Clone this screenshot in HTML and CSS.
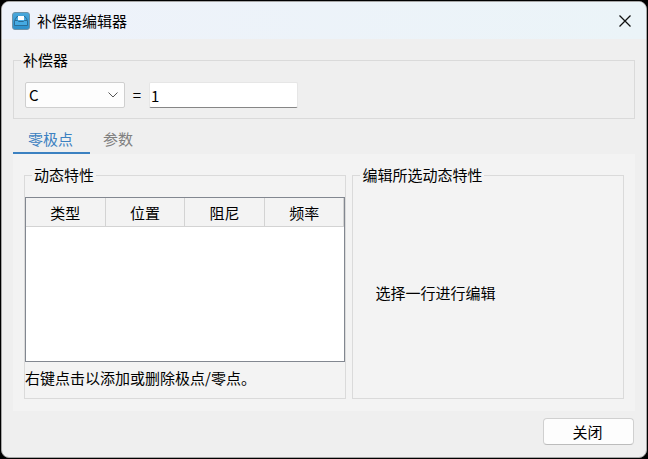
FILE: index.html
```html
<!DOCTYPE html>
<html lang="zh-CN">
<head>
    <meta charset="utf-8">
    <title>补偿器编辑器</title>
    <link rel="stylesheet" href="styles.css">
</head>
<body>
    <main class="window">
        <header class="titlebar">
            <svg class="app-icon" width="18" height="18" viewBox="0 0 18 18" aria-hidden="true">
                <defs>
                    <linearGradient id="iconFill" x1="0" y1="0" x2="0" y2="1">
                        <stop offset="0" stop-color="#4aa8dc"/>
                        <stop offset="1" stop-color="#2b90cc"/>
                    </linearGradient>
                </defs>
                <rect x="0.5" y="0.5" width="17" height="17" rx="2.5" fill="url(#iconFill)" stroke="#6d93a8"/>
                <path d="M2.5 8.5 L5 4.5 H13 L15.5 8.5 V13.5 H2.5 Z" fill="#45aae2" stroke="#2a6d96"/>
                <path d="M3 8.5 H5.5 L6.5 9.5 H11.5 L12.5 8.5 H15" fill="none" stroke="#2a6d96"/>
                <rect x="6" y="4" width="6" height="4" fill="#fff"/>
            </svg>
            <h1 class="title">补偿器编辑器</h1>
            <button class="close-x" type="button" aria-label="关闭窗口">
                <svg width="14" height="14" viewBox="0 0 14 14" aria-hidden="true">
                    <path d="M1.5 1.5 L12.5 12.5 M12.5 1.5 L1.5 12.5" stroke="#111" stroke-width="1.3" fill="none"/>
                </svg>
            </button>
        </header>

        <div class="content">
            <fieldset class="group">
                <legend>补偿器</legend>
                <div class="equation">
                    <span class="combo">
                        <select id="compensator" aria-label="补偿器">
                            <option>C</option>
                        </select>
                        <svg class="chevron" width="10" height="6" viewBox="0 0 10 6" aria-hidden="true">
                            <path d="M0.5 0.5 L5 5 L9.5 0.5" stroke="#555" fill="none"/>
                        </svg>
                    </span>
                    <label for="value">=</label>
                    <input id="value" type="text" value="1">
                </div>
            </fieldset>

            <div class="tabs" role="tablist">
                <button class="tab active" type="button" role="tab" aria-selected="true">零极点</button>
                <button class="tab" type="button" role="tab" aria-selected="false">参数</button>
            </div>

            <div class="panel" role="tabpanel">
                <fieldset class="group dynamics">
                    <legend>动态特性</legend>
                    <div class="table-box">
                        <table>
                            <thead>
                                <tr>
                                    <th>类型</th>
                                    <th>位置</th>
                                    <th>阻尼</th>
                                    <th>频率</th>
                                </tr>
                            </thead>
                            <tbody></tbody>
                        </table>
                    </div>
                    <p class="note">右键点击以添加或删除极点/零点。</p>
                </fieldset>
                <fieldset class="group edit">
                    <legend>编辑所选动态特性</legend>
                    <p class="hint">选择一行进行编辑</p>
                </fieldset>
            </div>

            <footer class="footer">
                <button class="btn" type="button">关闭</button>
            </footer>
        </div>
    </main>
</body>
</html>
```

FILE: styles.css
```css
* {
    box-sizing: border-box;
}
body {
    margin: 0;
    padding: 1px;
    min-height: 100vh;
    display: flex;
    background: #000;
    color: #000;
    font: 15px/20px "Noto Sans CJK SC", sans-serif;
}
button, input, select {
    font: inherit;
    color: inherit;
}
p {
    margin: 0;
}
.window {
    flex: 1;
    display: flex;
    flex-direction: column;
    overflow: hidden;
    background: #efefef;
    border: 1px solid #a6a6a6;
    border-radius: 8px;
}
.titlebar {
    display: flex;
    align-items: center;
    height: 37px;
    padding: 0 11px 0 10px;
    background: linear-gradient(90deg, #eef2fa, #ebf4f8);
}
.app-icon {
    margin-right: 7px;
}
.title {
    flex: 1;
    margin: 0;
    font-size: 15px;
    font-weight: normal;
}
.close-x {
    display: flex;
    padding: 3px;
    border: none;
    background: none;
}
.content {
    flex: 1;
    display: flex;
    flex-direction: column;
    padding: 11px;
}
.group {
    margin: 0;
    min-width: 0;
    padding: 12px 0 10px;
    border: 1px solid #dadada;
}
.group legend {
    margin-left: 7px;
    padding: 0 2px;
}
.equation {
    display: flex;
    align-items: center;
    padding-left: 11px;
}
.equation label {
    width: 24px;
    text-align: center;
}
.combo {
    display: flex;
    align-items: center;
    width: 100px;
    height: 26px;
    background: #fdfdfd;
    border: 1px solid #cfcfcf;
    border-radius: 2px;
}
.combo select {
    flex: 1;
    height: 24px;
    margin-right: -20px;
    padding: 0 20px 0 3px;
    border: none;
    background: none;
    appearance: none;
}
.chevron {
    margin-right: 6px;
    pointer-events: none;
}
.equation input {
    width: 149px;
    height: 26px;
    padding: 0 1px;
    background: #fff;
    border: 1px solid #e6e6e6;
    border-bottom-color: #868686;
    border-radius: 2px;
}
.tabs {
    display: flex;
    margin-top: 7px;
}
.tab {
    height: 28px;
    padding: 0 13px;
    border: none;
    border-bottom: 2px solid transparent;
    background: none;
    color: #808080;
}
.tab.active {
    padding: 0 17px 0 15px;
    color: #3c81c1;
    border-bottom-color: #3c81c1;
}
.panel {
    flex: 1;
    display: grid;
    grid-template-columns: 19fr 16fr;
    gap: 6px;
    padding: 11px 11px 12px;
    background: #f3f3f3;
}
.dynamics {
    display: flex;
    flex-direction: column;
}
.table-box {
    flex: 1;
    min-height: 120px;
    background: #fff;
    border: 1px solid #828790;
}
table {
    width: 100%;
    table-layout: fixed;
    border-collapse: separate;
    border-spacing: 0;
}
th {
    height: 29px;
    padding: 2px 0 0;
    background: #f3f3f3;
    border-right: 1px solid #d3d3d3;
    border-bottom: 1px solid #d3d3d3;
    font-weight: normal;
}
.note {
    margin-top: 6px;
}
.edit {
    display: flex;
    align-items: center;
}
.hint {
    padding-left: 22px;
}
.footer {
    display: flex;
    justify-content: flex-end;
    padding: 7px 1px 1px;
}
.btn {
    width: 91px;
    height: 27px;
    padding: 0 2px 0 0;
    background: #fdfdfd;
    border: 1px solid #d0d0d0;
    border-bottom-color: #bcbcbc;
    border-radius: 4px;
}
```
